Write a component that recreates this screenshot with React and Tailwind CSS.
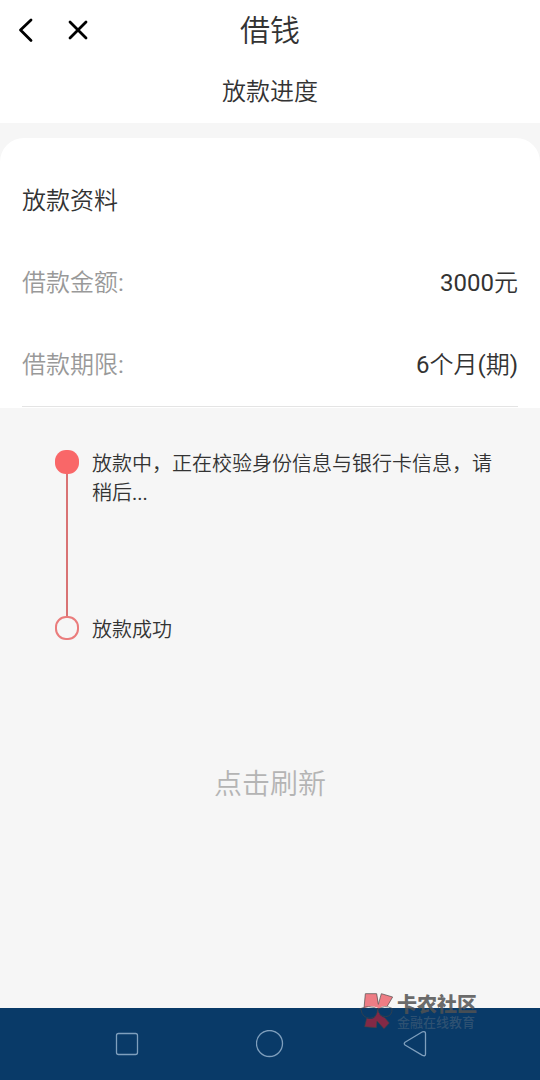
const loanInfo = [
  { label: "借款金额:", value: "3000元" },
  { label: "借款期限:", value: "6个月(期)" },
];

const Header = () => {
  return (
    <header className="bg-white">
      <div className="relative flex h-15 items-center justify-center">
        <div className="absolute inset-y-0 left-3 flex items-center gap-6">
          <button type="button" aria-label="返回" className="text-black">
            <svg viewBox="0 0 28 28" className="size-7" fill="none" stroke="currentColor" strokeWidth="2.8" strokeLinecap="round" strokeLinejoin="round">
              <path d="M19 4 8.5 14 19 24.5" />
            </svg>
          </button>
          <button type="button" aria-label="关闭" className="text-black">
            <svg viewBox="0 0 28 28" className="size-7" fill="none" stroke="currentColor" strokeWidth="2.8" strokeLinecap="round">
              <path d="M6 6l16 16M22 6 6 22" />
            </svg>
          </button>
        </div>
        <h1 className="text-[30px]">借钱</h1>
      </div>
      <h2 className="flex h-[63px] items-center justify-center text-2xl">放款进度</h2>
    </header>
  );
};

const LoanCard = () => {
  return (
    <section className="mt-[15px] rounded-t-3xl bg-white px-[22px] pt-[22px] pb-px">
      <h3 className="flex h-[82px] items-center text-2xl">放款资料</h3>
      <dl className="border-b border-[#e4e4e4]">
        {loanInfo.map((item) => (
          <div key={item.label} className="flex h-[82px] items-center justify-between text-2xl">
            <dt className="text-[#999]">{item.label}</dt>
            <dd>{item.value}</dd>
          </div>
        ))}
      </dl>
    </section>
  );
};

const Timeline = () => {
  return (
    <ol className="mt-[42px] pr-11 pl-[55px] text-xl leading-[29px]">
      <li className="flex min-h-[166px] gap-[13px]">
        <div className="flex w-6 shrink-0 flex-col items-center">
          <span className="h-6 w-full rounded-[11px] bg-[#f96768]" />
          <span className="w-[2px] grow bg-[#d97374]" />
        </div>
        <p>放款中，正在校验身份信息与银行卡信息，请稍后...</p>
      </li>
      <li className="flex gap-[13px]">
        <div className="w-6 shrink-0">
          <span className="block h-6 rounded-[11px] border-2 border-[#ea7c7c]" />
        </div>
        <p>放款成功</p>
      </li>
    </ol>
  );
};

const Watermark = () => {
  return (
    <div className="pointer-events-none absolute right-[63px] bottom-[51px] flex items-center gap-1">
      <svg viewBox="60 36 100 108" className="h-9 w-[34px]" aria-hidden="true">
        <g fill="#e81b2a" opacity="0.55">
          <path d="M78 38H112L118 70 126 38 160 48 144 76Q128 72 118 84L115 80Q96 70 74 82Z" />
          <path d="M102 112Q114 104 115 84Q118 106 136 110L150 126 134 143 113 120 111 140 76 137 82 112Q92 116 102 112Z" />
        </g>
        <g fill="none" stroke="#444" strokeWidth="3" strokeLinejoin="round" opacity="0.65">
          <path d="M74 82 78 38H112L117 70 126 38 160 48 144 75" />
          <path d="M82 112 76 137 111 140 113 120 134 143 150 126 136 110" />
          <path d="M61 84Q88 70 115 84Q114 110 92 112Q68 110 65 86Z" />
          <path d="M115 86Q136 70 158 82Q160 105 139 107Q120 106 115 86Z" />
        </g>
      </svg>
      <div className="font-['Roboto','Noto_Sans_CJK_SC',sans-serif]">
        <p className="text-xl leading-6 font-black text-[#525252]/85">卡农社区</p>
        <p className="text-[13px] leading-3 font-medium text-[#8c8c8c]/30">金融在线教育</p>
      </div>
    </div>
  );
};

const NavBar = () => {
  return (
    <div className="relative mt-auto bg-[#093a68]">
      <nav className="grid h-18 grid-cols-3 place-items-center px-[54px] text-[#7f9fbd]">
        <button type="button" aria-label="最近任务">
          <svg viewBox="0 0 28 28" className="size-7" fill="none" stroke="currentColor" strokeWidth="1.3">
            <rect x="4.5" y="3.5" width="21" height="21" rx="2" />
          </svg>
        </button>
        <button type="button" aria-label="主页">
          <svg viewBox="0 0 28 28" className="size-7" fill="none" stroke="currentColor" strokeWidth="1.3">
            <circle cx="13.5" cy="13.5" r="13" />
          </svg>
        </button>
        <button type="button" aria-label="返回上一页">
          <svg viewBox="0 0 28 28" className="size-7" fill="none" stroke="currentColor" strokeWidth="1.3" strokeLinejoin="round">
            <path d="M5 12.2 22.5 1.8Q25.5 1 25.5 3.5V24Q25.5 26.5 22.5 25.4L5 15Q3.5 13.6 5 12.2Z" />
          </svg>
        </button>
      </nav>
      <Watermark />
    </div>
  );
};

export default function App() {
  return (
    <div className="flex min-h-screen flex-col bg-[#f6f6f6] font-['Roboto','Noto_Sans_CJK_SC_DemiLight','Noto_Sans_CJK_SC',sans-serif] text-[#333]">
      <Header />
      <LoanCard />
      <Timeline />
      <button type="button" className="mx-auto mt-[120px] mb-10 text-[28px] leading-10 text-[#b4b4b4]">
        点击刷新
      </button>
      <NavBar />
    </div>
  );
}
